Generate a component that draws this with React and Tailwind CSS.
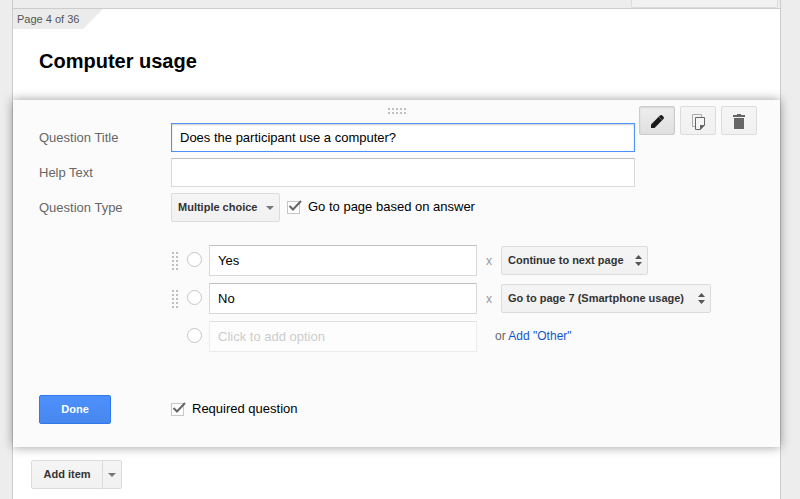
import React from "react";

const gray =
  "border border-[#dcdcdc] bg-linear-to-b from-[#f5f5f5] to-[#f1f1f1] text-[11px] font-bold text-[#333]";

function Dots({ cols, rows }) {
  const w = cols * 4 - 2;
  const h = rows * 4 - 2;
  const cells = [];
  for (let r = 0; r < rows; r++)
    for (let c = 0; c < cols; c++)
      cells.push(<rect key={`${r}-${c}`} x={c * 4} y={r * 4} width="2" height="2" />);
  return (
    <svg width={w} height={h} viewBox={`0 0 ${w} ${h}`} fill="#c0c0c0" aria-hidden="true">
      {cells}
    </svg>
  );
}

function Picker({ label, options, width, split }) {
  return (
    <div className={`grid h-[29px] items-center ${width}`}>
      <select
        aria-label={label}
        className={`${gray} col-start-1 row-start-1 h-[29px] w-full appearance-none rounded-xs pb-0.5 pl-1.5 outline-none`}
      >
        {options.map((o) => (
          <option key={o}>{o}</option>
        ))}
      </select>
      {split ? (
        <svg className="pointer-events-none col-start-1 row-start-1 mr-1.5 justify-self-end" width="7" height="11" viewBox="0 0 7 11" fill="#555">
          <path d="M3.500 0 7 4H0zM3.500 11 0 7h7z" />
        </svg>
      ) : (
        <svg className="pointer-events-none col-start-1 row-start-1 mr-1.5 justify-self-end" width="8" height="4" viewBox="0 0 8 4" fill="#777">
          <path d="M0 0h8L4 4z" />
        </svg>
      )}
    </div>
  );
}

function Check({ label }) {
  return (
    <label className="flex items-center pb-0.5">
      <span className="grid size-[15px]">
        <input
          type="checkbox"
          defaultChecked
          className="col-start-1 row-start-1 size-[13px] appearance-none self-end border border-[#c6c6c6] bg-white"
        />
        <svg className="pointer-events-none col-start-1 row-start-1" width="15" height="15" viewBox="0 0 15 15" fill="none" stroke="#666" strokeWidth="2">
          <path d="M2.500 7 6 10.500 14 2" />
        </svg>
      </span>
      <span className="ml-1.5">{label}</span>
    </label>
  );
}

function Field({ id, label, children }) {
  return (
    <div className="flex items-center">
      <label htmlFor={id} className="w-[132px] shrink-0 text-[#666]">
        {label}
      </label>
      {children}
    </div>
  );
}

function OptionRow({ value, children }) {
  const filled = value !== undefined;
  return (
    <div className="flex items-center">
      <span className="w-4 shrink-0 pl-px">{filled && <Dots cols={2} rows={5} />}</span>
      <input
        type="radio"
        name="option"
        disabled
        aria-label={value || "New option"}
        className="mb-0.5 size-[15px] shrink-0 appearance-none rounded-full border border-[#c6c6c6] bg-white"
      />
      <input
        type="text"
        aria-label="Option text"
        defaultValue={value}
        placeholder="Click to add option"
        className={`ml-[7px] h-[31px] w-[268px] border px-2 outline-none placeholder:text-[#ccc] ${
          filled ? "border-[#d9d9d9] border-t-[#c0c0c0] bg-white" : "border-[#ececec] border-t-[#e0e0e0] bg-[#fdfdfd]"
        }`}
      />
      {children}
    </div>
  );
}

function Remove() {
  return (
    <button type="button" aria-label="Remove option" className="w-6 text-center text-[12px] text-[#999]">
      x
    </button>
  );
}

export default function App() {
  return (
    <div className="min-h-screen bg-[#ededed] pr-[19px] pl-3 font-['Liberation_Sans',Arial,sans-serif] text-[13px] leading-4 text-black">
      <main className="flex min-h-screen flex-col border-x border-[#ccc] bg-white">
        <div className="flex h-[9px] justify-end border-b border-[#ccc] bg-[#ededed] pr-0.5">
          <div className="h-2 w-[147px] rounded-b-xs border border-t-0 border-[#dcdcdc] bg-[#f1f1f1]" />
        </div>

        <div className="h-5 w-[90px] bg-[#ebebeb] pl-1 text-[11px] leading-5 text-[#555] [clip-path:polygon(0_0,100%_0,70px_100%,0_100%)]">
          Page 4 of 36
        </div>
        <h1 className="px-[26px] pt-[18px] pb-[25px] text-[20px] leading-7 font-bold">Computer usage</h1>

        <form
          className="relative bg-[#fbfbfb] shadow-[0_0_10px_rgba(0,0,0,0.4)]"
          onSubmit={(e) => e.preventDefault()}
        >
          <div className="absolute top-2 left-1/2 -translate-x-1/2 cursor-move">
            <Dots cols={5} rows={2} />
          </div>

          <div className="flex gap-1 pr-[23px] pl-[26px]">
            <div className="flex flex-1 flex-col gap-1.5 pt-[23px]">
              <Field id="title" label="Question Title">
                <input
                  id="title"
                  type="text"
                  defaultValue="Does the participant use a computer?"
                  className="h-[29px] w-full border border-[#4d90fe] bg-white px-2 shadow-[inset_0_1px_2px_rgba(0,0,0,0.2)] outline-none"
                />
              </Field>
              <Field id="help" label="Help Text">
                <input
                  id="help"
                  type="text"
                  className="h-[29px] w-full border border-[#d9d9d9] border-t-[#c0c0c0] bg-white px-2 outline-none"
                />
              </Field>
              <div className="flex items-center">
                <span className="w-[132px] shrink-0 text-[#666]">Question Type</span>
                <Picker label="Question Type" options={["Multiple choice"]} width="w-[109px]" />
                <div className="ml-[7px]">
                  <Check label="Go to page based on answer" />
                </div>
              </div>
            </div>

            <div className="flex gap-[5px] pt-1.5">
              <button
                type="button"
                aria-label="Edit"
                className="grid h-[29px] w-9 place-items-center rounded-xs border border-[#ccc] bg-linear-to-b from-[#eee] to-[#e0e0e0] shadow-[inset_0_1px_2px_rgba(0,0,0,0.1)]"
              >
                <svg className="mt-0.5" width="13" height="13" viewBox="0 0 13 13" fill="#1a1a1a">
                  <path d="M0 13V9.500L8.200 1.300 11.700 4.800 3.500 13z" />
                  <path d="M8 1.500 9 .6Q10-.3 11.200.5L12.500 1.800Q13.300 3 12.400 4L11.500 5z" />
                  <path d="M8 2.200 10.800 5" stroke="#aaa" strokeWidth="0.6" />
                </svg>
              </button>
              <button type="button" aria-label="Duplicate" className={`grid h-[29px] w-9 place-items-center rounded-xs ${gray}`}>
                <svg className="mt-0.5" width="13" height="16" viewBox="0 0 13 16" fill="none">
                  <path d="M3 12.500H.5V.5h9V3" stroke="#aaa" />
                  <path d="M3.500 3.500h9V11L8.500 15.500h-5z" fill="#f5f5f5" stroke="#666" />
                  <path d="M8 16v-5h5z" fill="#666" />
                </svg>
              </button>
              <button type="button" aria-label="Delete" className={`grid h-[29px] w-9 place-items-center rounded-xs ${gray}`}>
                <svg className="mt-0.5" width="12" height="15" viewBox="0 0 12 15" fill="#666">
                  <path d="M4 0h4v1h4v2H0V1h4zM1 4h10v11H1z" />
                </svg>
              </button>
            </div>
          </div>

          <div className="mt-[23px] flex flex-col gap-[7px] pl-[158px]">
            <OptionRow value="Yes">
              <Remove />
              <Picker label="After Yes" options={["Continue to next page"]} width="w-[147px]" split />
            </OptionRow>
            <OptionRow value="No">
              <Remove />
              <Picker label="After No" options={["Go to page 7 (Smartphone usage)"]} width="w-[210px]" split />
            </OptionRow>
            <OptionRow>
              <span className="ml-[18px] pb-0.5 text-[12px] text-[#666]">
                or{" "}
                <a href="#other" className="text-[#15c]">
                  Add "Other"
                </a>
              </span>
            </OptionRow>
          </div>

          <div className="mt-[43px] flex items-center px-[26px] pb-[23px]">
            <button
              type="submit"
              className="mr-[60px] h-[29px] w-[72px] rounded-xs border border-[#3079ed] bg-linear-to-b from-[#4d90fe] to-[#4787ed] pb-0.5 text-[11px] font-bold text-white"
            >
              Done
            </button>
            <Check label="Required question" />
          </div>
        </form>

        <div className="flex px-[18px] pt-[13px]">
          <button type="button" className={`h-[29px] w-[72px] rounded-l-xs pb-0.5 ${gray}`}>
            Add item
          </button>
          <button type="button" aria-label="More items" className={`-ml-px grid h-[29px] w-5 place-items-center rounded-r-xs ${gray}`}>
            <svg width="8" height="4" viewBox="0 0 8 4" fill="#777">
              <path d="M0 0h8L4 4z" />
            </svg>
          </button>
        </div>
      </main>
    </div>
  );
}
